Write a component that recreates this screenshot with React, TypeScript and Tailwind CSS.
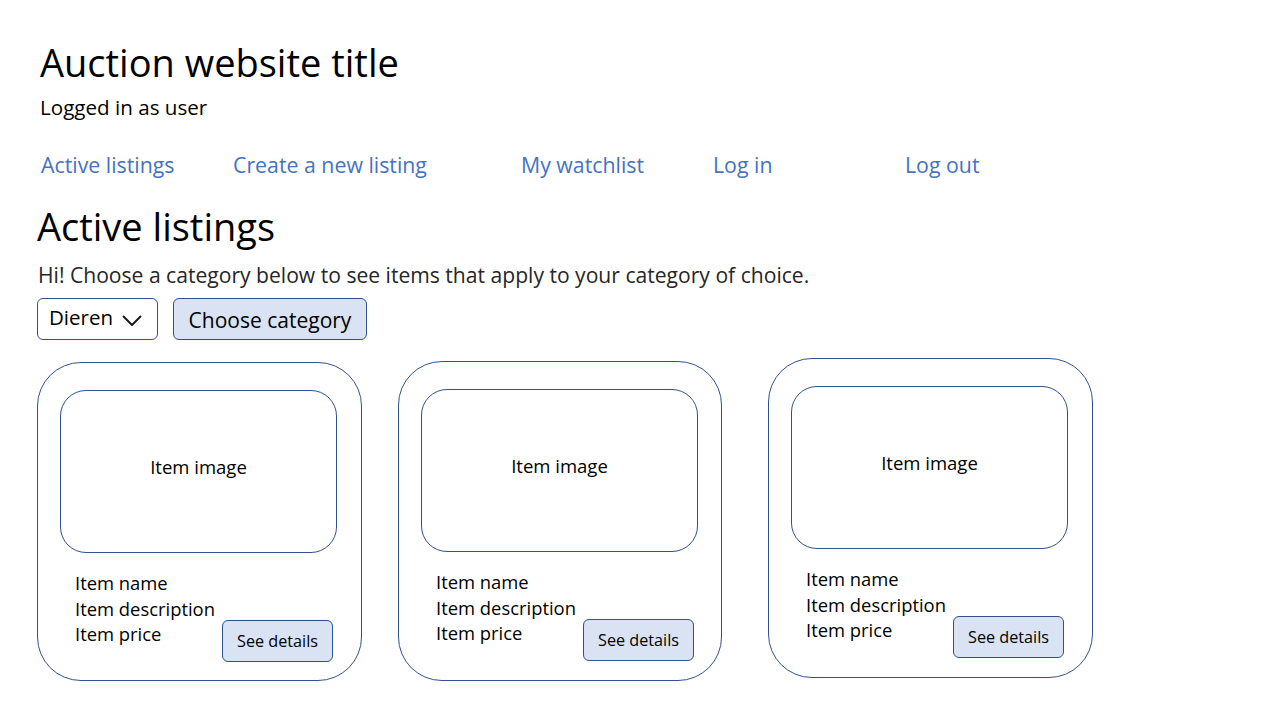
const cards = [
  { id: 1, wrap: 'ml-0 mt-[4px] w-[325px] h-[319px]' },
  { id: 2, wrap: 'ml-[36px] mt-[3px] w-[324px] h-[320px]' },
  { id: 3, wrap: 'ml-[46px] mt-0 w-[325px] h-[320px]' },
];

function ListingCard({ wrap }: { wrap: string }) {
  return (
    <div className={`${wrap} shrink-0 rounded-[44px] border border-[#2f528f] px-[22px] pt-[27px]`}>
      <div className="flex h-[163px] w-[277px] items-center justify-center rounded-[26px] border border-[#2f528f] pb-[10px] text-[18.5px]">
        Item image
      </div>
      <div className="mt-[17px] flex items-start pl-[15px]">
        <div className="w-[147px] text-[18.4px] leading-[25.5px]">
          <div>Item name</div>
          <div>Item description</div>
          <div>Item price</div>
        </div>
        <button className="mt-[50px] h-[42px] w-[111px] rounded-[6px] border border-[#2f528f] bg-[#dae3f3] pt-[1px] text-[16.2px]">
          See details
        </button>
      </div>
    </div>
  );
}

export default function App() {
  const links = [
    { label: 'Active listings', w: 'w-[192px]' },
    { label: 'Create a new listing', w: 'w-[288px]' },
    { label: 'My watchlist', w: 'w-[192px]' },
    { label: 'Log in', w: 'w-[192px]' },
    { label: 'Log out', w: 'w-[192px]' },
  ];

  return (
    <div className="min-h-screen w-[1280px] bg-white pl-[37px] pt-[39px] text-black" style={{ fontFamily: '"Open Sans", "Noto Sans", sans-serif' }}>
      <h1 className="ml-[3px] text-[38px] leading-[46px]">Auction website title</h1>
      <div className="ml-[3px] mt-[8px] text-[20.6px] leading-[28px]">Logged in as user</div>

      <nav className="ml-[4px] mt-[30px] flex text-[21.3px] leading-[28px] text-[#4472c4]">
        {links.map((l) => (
          <a key={l.label} href="#" className={`${l.w} shrink-0`}>
            {l.label}
          </a>
        ))}
      </nav>

      <h2 className="mt-[24px] text-[38px] leading-[46px]">Active listings</h2>
      <p className="ml-[1px] mt-[12px] text-[21.1px] leading-[28px] text-[#262626]">
        Hi! Choose a category below to see items that apply to your category of choice.
      </p>

      <div className="mt-[9px] flex gap-[15px]">
        <div className="flex h-[42px] w-[121px] items-center rounded-[6px] border border-[#2f528f] pb-[3px] pl-[11px] text-[20.5px]">
          <span>Dieren</span>
          <svg className="ml-[9px] mt-[7px]" width="20" height="12" viewBox="0 0 20 12" fill="none">
            <path d="M1.5 1.5 L10 10 L18.5 1.5" stroke="#1a1a1a" strokeWidth="2" strokeLinecap="round" strokeLinejoin="round" />
          </svg>
        </div>
        <button className="h-[42px] w-[194px] rounded-[6px] border border-[#2f528f] bg-[#dae3f3] pt-[3px] text-[21px]">
          Choose category
        </button>
      </div>

      <div className="mt-[18px] flex items-start">
        {cards.map((c) => (
          <ListingCard key={c.id} wrap={c.wrap} />
        ))}
      </div>
    </div>
  );
}
